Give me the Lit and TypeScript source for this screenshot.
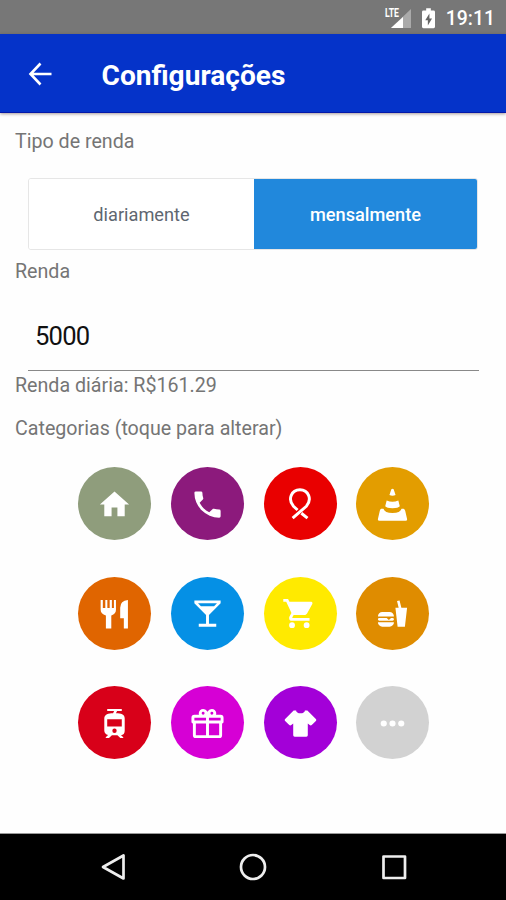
import { LitElement, html, css, svg } from "lit";
import { customElement, property, state } from "lit/decorators.js";
import { classMap } from "lit/directives/class-map.js";

const icons: Record<string, unknown> = {
  home: svg`<path d="M10 20V14H14V20H19V12H22L12 3L2 12H5V20H10Z"/>`,
  phone: svg`<path d="M6.62 10.79C8.06 13.62 10.38 15.94 13.21 17.38L15.41 15.18C15.69 14.9 16.08 14.82 16.43 14.93C17.55 15.3 18.75 15.5 20 15.5A1 1 0 0 1 21 16.5V20A1 1 0 0 1 20 21A17 17 0 0 1 3 4A1 1 0 0 1 4 3H7.5A1 1 0 0 1 8.5 4C8.5 5.25 8.7 6.45 9.07 7.57C9.18 7.92 9.1 8.31 8.82 8.59L6.62 10.79Z"/>`,
  ribbon: svg`<path fill="none" stroke="currentColor" stroke-width="2" d="M6.6 21.4L16 13.2C20.2 8.4 17.4 1.9 11.6 1.9S3 8.4 7.2 13.2L10 15.8M12.6 18L16.8 21.4"/>`,
  cone: svg`<path d="M11.2 1.6Q12 .8 12.8 1.6L14.1 5.4Q12 6.5 9.9 5.4ZM8 9.3Q12 11 16 9.3L17 13.2Q16 14.5 12 14.5T7 13.2ZM4.4 14.9H5.8Q6.6 17.8 12 17.8T18.2 14.9H19.3Q20.3 14.9 20.7 16.2L22 22Q22.2 23.2 21 23.2H3Q1.8 23.2 2 22L3.3 16.2Q3.6 14.9 4.4 14.9Z"/>`,
  cutlery: svg`<path d="M2.5 2.8H4V8.2H5.7V2.8H7.1V8.2H8.7V2.8H10.2V8.2H11.6V2.8H13V9.5Q13 12.5 9.8 13.3V22.2H6.1V13.3Q2.5 12.5 2.5 9.5ZM21.2 2.8V22.2H18.4V15.3H15.9V8Q16 3.2 21.2 2.8Z"/>`,
  drink: svg`<path d="M7.5 7L5.5 5H18.5L16.5 7M11 13V19H6V21H18V19H13V13L21 5V3H3V5L11 13Z"/>`,
  cart: svg`<path transform="translate(-.8)" d="M17 18A2 2 0 1 0 17 22A2 2 0 0 0 17 18M1 2V4H3L6.6 11.59L5.24 14.04C5.09 14.32 5 14.65 5 15A2 2 0 0 0 7 17H19V15H7.42A.25 .25 0 0 1 7.17 14.75C7.17 14.7 7.18 14.66 7.2 14.63L8.1 13H15.55C16.3 13 16.96 12.58 17.3 11.97L20.88 5.5C20.95 5.34 21 5.17 21 5A1 1 0 0 0 20 4H5.21L4.27 2M7 18A2 2 0 1 0 7 22A2 2 0 0 0 7 18Z"/>`,
  food: svg`<path d="M15.5 21L14 8H16.23L15.1 3.46L16.84 3L18.09 8H22L20.5 21H15.5M5 11H10A3 3 0 0 1 13 14H2A3 3 0 0 1 5 11M13 18A3 3 0 0 1 10 21H5A3 3 0 0 1 2 18H13M3 15H8L9.5 16.5L11 15H12A1 1 0 0 1 12 17H3A1 1 0 0 1 3 15Z"/>`,
  tram: svg`<path fill-rule="evenodd" d="M19 16.94V8.5C19 5.71 16.39 5.1 13 5L13.75 3.5H17V2H7V3.5H11.75L11 5C7.86 5.11 5 5.73 5 8.5V16.94C5 18.39 6.19 19.6 7.59 19.91L6 21.5V22H8.23L10.23 20H14L16 22H18V21.5L16.5 20H16.42C18.11 20 19 18.63 19 16.94M12 18.5A1.5 1.5 0 1 1 12 15.5A1.5 1.5 0 0 1 12 18.5M17 14H7V9H17V14Z"/>`,
  gift: svg`<path fill-rule="evenodd" d="M22 12V20A2 2 0 0 1 20 22H4A2 2 0 0 1 2 20V12A1 1 0 0 1 1 11V8A2 2 0 0 1 3 6H6.17C6.06 5.69 6 5.35 6 5A3 3 0 0 1 9 2C10 2 10.88 2.5 11.43 3.24L12 4L12.57 3.24C13.12 2.5 14 2 15 2A3 3 0 0 1 18 5C18 5.35 17.94 5.69 17.83 6H21A2 2 0 0 1 23 8V11A1 1 0 0 1 22 12M4 20H11V12H4V20M20 20V12H13V20H20M9 4A1 1 0 1 0 9 6A1 1 0 0 0 9 4M15 4A1 1 0 1 0 15 6A1 1 0 0 0 15 4M3 8V10H11V8H3M13 8V10H21V8H13Z"/>`,
  shirt: svg`<path d="M16 21H8A1 1 0 0 1 7 20V12.07L5.7 13.07C5.31 13.46 4.68 13.46 4.29 13.07L1.46 10.24C1.07 9.85 1.07 9.22 1.46 8.83L7.31 3H9C9 4.1 10.34 5 12 5C13.66 5 15 4.1 15 3H16.69L22.54 8.83C22.93 9.22 22.93 9.85 22.54 10.24L19.71 13.07C19.32 13.46 18.69 13.46 18.3 13.07L17 12.07V20A1 1 0 0 1 16 21Z"/>`,
  more: svg`<circle cx="6" cy="12" r="2.1"/><circle cx="12" cy="12" r="2.1"/><circle cx="18" cy="12" r="2.1"/>`,
};

@customElement("category-button")
class CategoryButton extends LitElement {
  @property() icon = "";
  @property() label = "";
  @property() color = "";

  static styles = css`
    :host { display: block; }
    .circle {
      width: 73px; height: 73px; box-sizing: border-box; padding: 1px 0 0; border: 0; border-radius: 50%;
      display: flex; align-items: center; justify-content: center; color: #fff;
    }
    .icon { width: 35px; height: 35px; flex: none; fill: currentColor; overflow: visible; }
  `;

  render() {
    return html`<button class="circle" aria-label=${this.label} style="background:${this.color}">
      <svg class="icon" viewBox="0 0 24 24">${icons[this.icon]}</svg>
    </button>`;
  }
}

@customElement("app-root")
class AppRoot extends LitElement {
  @state() private period = "mensalmente";

  private categories = [
    ["home", "Casa", "#8f9d7c"],
    ["phone", "Telefone", "#8c1a7c"],
    ["ribbon", "Saúde", "#e90000"],
    ["cone", "Imprevistos", "#e39d00"],
    ["cutlery", "Restaurante", "#e06500"],
    ["drink", "Bebidas", "#0590e5"],
    ["cart", "Compras", "#ffea00"],
    ["food", "Lanches", "#df8c00"],
    ["tram", "Transporte", "#d80019"],
    ["gift", "Presentes", "#d600d5"],
    ["shirt", "Roupas", "#a300d8"],
    ["more", "Outros", "#d2d2d2"],
  ];

  static styles = css`
    :host {
      display: flex; flex-direction: column; height: 900px; overflow: hidden;
      background: #fefefe; color: #757575;
      font-family: Roboto, "Liberation Sans", sans-serif; font-size: 19.65px;
    }
    .status {
      height: 34px; flex: none; background: #777; color: #fff; box-sizing: border-box;
      display: flex; align-items: center; justify-content: flex-end; padding: 2px 11px 0 0;
      font-size: 19.4px; font-weight: 500;
    }
    .signal { width: 28px; height: 28px; margin-right: 11px; overflow: visible; }
    .lte { font: 700 12px Roboto, sans-serif; fill: #fff; }
    .battery { width: 13px; height: 21px; margin-right: 11px; }
    .bar {
      height: 79px; flex: none; box-sizing: border-box; background: #0533c9; color: #fff;
      border-bottom: 1px solid #0418a8; box-shadow: 0 1px 3px rgba(60, 30, 30, .45);
      display: flex; align-items: center; padding: 2px 0 0 28px;
    }
    .back { width: 24px; height: 24px; margin: 0 49.5px 1px 0; }
    .title { margin: 0; font-size: 28.1px; font-weight: 700; line-height: 32px; padding-top: 4px; }
    .content { flex: 1; display: flex; flex-direction: column; padding-top: 17px; }
    .label { margin: 0 15px; line-height: 24px; }
    .segments {
      display: flex; height: 72px; box-sizing: border-box; margin: 24px 28px 10px;
      border: 1px solid #e6e6e6; border-radius: 3px; overflow: hidden;
    }
    .segment {
      flex: none; width: 225px; border: 0; padding: 0; background: #fff; color: #5e6670;
      font: 400 18.2px Roboto, sans-serif;
    }
    .segment.active { flex: 1; background: #2188dc; color: #fff; font-weight: 500; }
    .amount {
      margin: 17px 27px 3px 28px; height: 70px; box-sizing: border-box; padding: 0 7px;
      border: 0; border-bottom: 1px solid #898989; border-radius: 0; background: none; outline: none;
      color: #111; font: 400 25.6px Roboto, sans-serif; letter-spacing: -.8px;
    }
    .heading { margin-top: 19px; }
    .grid {
      display: grid; grid-template-columns: repeat(4, 73px); column-gap: 19.8px; row-gap: 36.5px;
      margin: 26px 0 0 78px;
    }
    .nav {
      height: 67px; flex: none; box-sizing: border-box; background: #000; border-top: 1px solid #999;
      display: flex; justify-content: center; align-items: center; gap: 112.5px;
    }
    .key { width: 28px; height: 28px; fill: none; stroke: #eee; stroke-width: 2.7; stroke-linejoin: round; }
  `;

  render() {
    return html`
      <div class="status">
        <svg class="signal" viewBox="0 -3 28 28">
          <path d="M28 2V21H8Z" fill="#aaa"/><path d="M20 10V21H8Z" fill="#fff"/>
          <path d="M1 -1H17V11H1Z" fill="#777"/>
          <text class="lte" x="2" y="10" textLength="14" lengthAdjust="spacingAndGlyphs">LTE</text>
        </svg>
        <svg class="battery" viewBox="0 0 14 22">
          <path fill="#fff" d="M4.5 0H9.5V2.5H12.5Q14 2.5 14 4V20Q14 21.5 12.5 21.5H1.5Q0 21.5 0 20V4Q0 2.5 1.5 2.5H4.5Z"/>
          <path fill="#666" d="M8 5.5L3.5 13H6.3V18.5L10.8 11H8Z"/>
        </svg>
        <span>19:11</span>
      </div>
      <header class="bar">
        <svg class="back" viewBox="0 0 24 24" fill="none" stroke="#fff" stroke-width="2.6">
          <path d="M12.5 1.5L2.5 12L12.5 22.5M2.5 12H23.5"/>
        </svg>
        <h1 class="title">Configurações</h1>
      </header>
      <main class="content">
        <p class="label">Tipo de renda</p>
        <div class="segments">
          ${["diariamente", "mensalmente"].map((p) => html`
            <button class=${classMap({ segment: true, active: p === this.period })}
              @click=${() => (this.period = p)}>${p}</button>`)}
        </div>
        <p class="label">Renda</p>
        <input class="amount" value="5000">
        <p class="label">Renda diária: R$161.29</p>
        <p class="label heading">Categorias (toque para alterar)</p>
        <div class="grid">
          ${this.categories.map(([icon, label, color]) => html`
            <category-button .icon=${icon} .label=${label} .color=${color}></category-button>`)}
        </div>
      </main>
      <nav class="nav">
        <svg class="key" viewBox="0 0 28 28"><path d="M24.5 2.5V25.5L4 14Z"/></svg>
        <svg class="key" viewBox="0 0 28 28"><circle cx="14" cy="14" r="12"/></svg>
        <svg class="key" viewBox="0 0 28 28"><path d="M3.5 3.5H25V25H3.5Z"/></svg>
      </nav>
    `;
  }
}
